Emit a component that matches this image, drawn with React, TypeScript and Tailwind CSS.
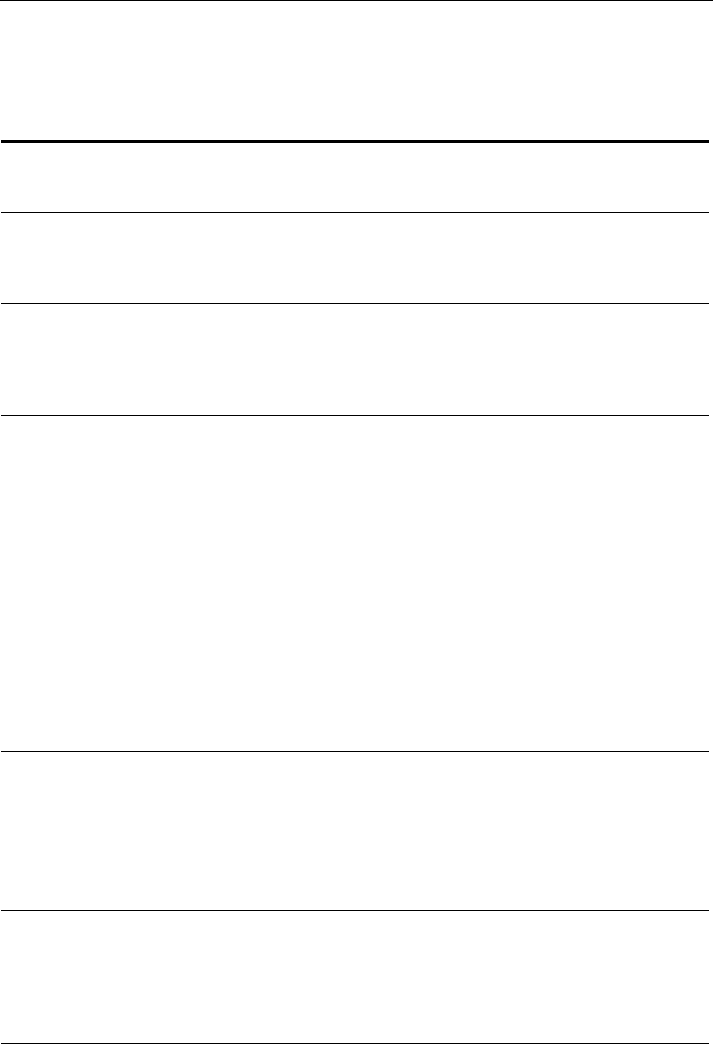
export default function App() {
  const rows = [70, 91, 112, 336, 159, 133];
  return (
    <div className="min-h-[1045px] w-[713px] bg-white border-t border-black font-['Liberation_Sans',sans-serif]">
      <div className="ml-px w-[708px]">
        <div className="h-[142px] border-b-[3px] border-black" />
        {rows.map((h, i) => (
          <div key={i} className="border-b border-black" style={{ height: h }} />
        ))}
      </div>
    </div>
  );
}
